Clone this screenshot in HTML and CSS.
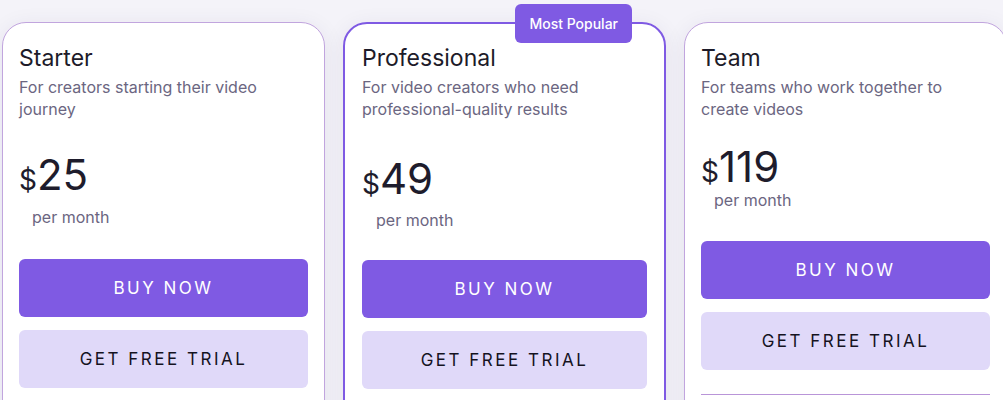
FILE: index.html
```html
<!DOCTYPE html>
<html>

<head>
    <meta charset="UTF-8">
    <meta name="viewport" content="width=device-width, initial-scale=1.0">
    <link rel="stylesheet" href="styles.css">
    <title>Pricing</title>
</head>

<body>
    <div class="plans">
        <div class="plan">
            <h2 class="plan-name">Starter</h2>
            <p class="plan-desc">For creators starting their video journey</p>
            <div class="plan-price"><span class="currency">$</span><span class="amount">25</span></div>
            <div class="plan-period">per month</div>
            <button class="btn btn-buy">Buy now</button>
            <button class="btn btn-trial">Get free trial</button>
            <hr class="plan-divider">
            <ul class="plan-features">
                <li>30 videos per month</li>
                <li>1080p exports</li>
                <li>Basic templates</li>
            </ul>
        </div>

        <div class="plan plan--popular">
            <span class="badge">Most Popular</span>
            <h2 class="plan-name">Professional</h2>
            <p class="plan-desc">For video creators who need professional-quality results</p>
            <div class="plan-price"><span class="currency">$</span><span class="amount">49</span></div>
            <div class="plan-period">per month</div>
            <button class="btn btn-buy">Buy now</button>
            <button class="btn btn-trial">Get free trial</button>
            <hr class="plan-divider">
            <ul class="plan-features">
                <li>Unlimited videos</li>
                <li>4K exports</li>
                <li>Premium templates</li>
            </ul>
        </div>

        <div class="plan plan--team">
            <h2 class="plan-name">Team</h2>
            <p class="plan-desc">For teams who work together to create videos</p>
            <div class="plan-price"><span class="currency">$</span><span class="amount">119</span></div>
            <div class="plan-period">per month</div>
            <button class="btn btn-buy">Buy now</button>
            <button class="btn btn-trial">Get free trial</button>
            <hr class="plan-divider">
            <ul class="plan-features">
                <li>Everything in Professional</li>
                <li>5 team seats</li>
                <li>Shared brand kit</li>
            </ul>
        </div>
    </div>
</body>

</html>
```

FILE: styles.css
```css
body {
    font-family: 'Inter', 'Roboto', sans-serif;
    background-color: #f4f3f9;
    margin: 0;
    padding: 0;
    overflow: hidden;
}

.plans {
    display: flex;
    gap: 18px;
    padding: 22px 0 40px 2px;
    overflow: hidden;
}

.plan {
    position: relative;
    flex: 0 0 323px;
    box-sizing: border-box;
    padding: 21px 16px 24px;
    background-color: #ffffff;
    border: 1px solid #c1a5de;
    border-radius: 24px;
    box-shadow: 0 4px 22px rgba(50, 40, 90, 0.08);
}

.plan--popular {
    border: 2px solid #7f5ae3;
    padding: 20px 17px 24px;
}

.badge {
    position: absolute;
    top: -20px;
    right: 32px;
    padding: 11px 14px;
    font-size: 14px;
    line-height: 17px;
    font-weight: 500;
    color: #ffffff;
    background-color: #7f5ae3;
    border-radius: 6px;
}

.plan-name {
    margin: 0 0 4px;
    font-size: 23px;
    line-height: 28px;
    font-weight: 400;
    color: #1d1b29;
}

.plan-desc {
    margin: 0;
    font-size: 16px;
    line-height: 22px;
    color: #6b6681;
}

.plan-price {
    margin-top: 34px;
    line-height: 1;
    color: #1e1c2c;
}

.currency {
    font-size: 28px;
}

.amount {
    font-size: 42px;
}

.plan-period {
    margin-top: 10px;
    padding-left: 13px;
    font-size: 16px;
    line-height: 22px;
    color: #6b6681;
}

/* 每張卡的價格區高度不太一樣 */
.plan--popular .plan-price {
    margin-top: 38px;
}

.plan--popular .plan-period {
    margin-top: 9px;
    padding-left: 14px;
}

.plan--popular .btn-buy {
    margin-top: 29px;
}

.plan--team .plan-price {
    margin-top: 26px;
}

.plan--team .plan-period {
    margin-top: 1px;
}

.plan--team .btn-buy {
    margin-top: 30px;
}

.btn {
    display: block;
    width: 100%;
    height: 58px;
    border: none;
    border-radius: 6px;
    font-family: inherit;
    font-size: 17px;
    font-weight: 400;
    letter-spacing: 2.5px;
    text-transform: uppercase;
    cursor: pointer;
}

.btn-buy {
    margin-top: 31px;
    background-color: #7f5ae3;
    color: #ffffff;
}

.btn-trial {
    margin-top: 13px;
    background-color: #e0d9f9;
    color: #15131f;
}

.plan-divider {
    margin: 24px 0 20px;
    border: none;
    border-top: 1px solid #b995d8;
}

.plan-features {
    list-style: none;
    margin: 0;
    padding: 0;
    font-size: 15px;
    line-height: 30px;
    color: #3b3850;
}
```
